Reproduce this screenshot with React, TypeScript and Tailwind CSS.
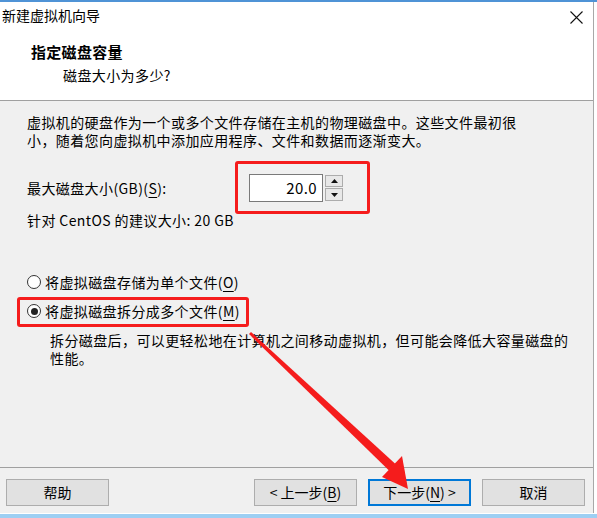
import React from "react";

const U = ({ children }: { children: React.ReactNode }) => (
  <span className="underline underline-offset-[3px] decoration-1">{children}</span>
);

const Radio = ({ checked, children }: { checked?: boolean; children: React.ReactNode }) => (
  <div className="flex h-[20px] items-center gap-[4px]">
    <span className="flex h-[14px] w-[14px] items-center justify-center rounded-full border border-[#333] bg-white">
      {checked && <span className="h-[7px] w-[7px] rounded-full bg-[#222]" />}
    </span>
    <span>{children}</span>
  </div>
);

const Button = ({ children, focused }: { children: React.ReactNode; focused?: boolean }) => (
  <button
    className={
      focused
        ? "flex h-[27px] w-[103px] items-center justify-center border-2 border-[#0078d7] bg-[#e1e1e1] text-[14px]"
        : "flex h-[27px] w-[103px] items-center justify-center border border-[#adadad] bg-[#e1e1e1] text-[14px]"
    }
  >
    {children}
  </button>
);

const SpinBox = () => (
  <div className="flex h-[28px] items-center gap-[2px]">
    <div className="flex h-[28px] w-[74px] items-center justify-end border border-[#7a7a7a] bg-white pr-[5px] text-[15px]">
      20.0
    </div>
    <div className="flex flex-col gap-[1px]">
      <div className="flex h-[12px] w-[18px] items-center justify-center border border-[#acacac] bg-[#e8e8e8]">
        <svg width="7" height="4" viewBox="0 0 7 4">
          <path d="M3.5 0 L7 4 L0 4 Z" fill="#111" />
        </svg>
      </div>
      <div className="flex h-[13px] w-[18px] items-center justify-center border border-[#acacac] bg-[#e8e8e8]">
        <svg width="7" height="4" viewBox="0 0 7 4">
          <path d="M0 0 L7 0 L3.5 4 Z" fill="#111" />
        </svg>
      </div>
    </div>
  </div>
);

export default function App() {
  return (
    <div
      className="relative h-[518px] w-[597px] overflow-hidden bg-white text-[14px] text-black"
      style={{ fontFamily: '"Noto Sans CJK SC", "Noto Sans", sans-serif' }}
    >
      <div className="h-[2px] bg-[#4f93d6]" />
      <div className="w-[594px] border-r border-[#a8a8a8]">
        {/* header */}
        <div className="h-[98px] bg-white">
          <div className="flex h-[26px] items-center justify-between pl-[2px] pr-[10px]">
            <span>新建虚拟机向导</span>
            <svg width="13" height="13" viewBox="0 0 13 13" className="mt-[4px]">
              <path d="M0.5 0.5 L12.5 12.5 M12.5 0.5 L0.5 12.5" stroke="#111" strokeWidth="1.1" />
            </svg>
          </div>
          <div className="mt-[14px] flex h-[20px] items-center pl-[31px] text-[15px] font-bold tracking-[0.3px]">
            指定磁盘容量
          </div>
          <div className="mt-[3px] flex h-[20px] items-center pl-[63px] tracking-[0.4px]">磁盘大小为多少?</div>
        </div>
        <div className="h-px bg-[#a0a0a0]" />

        {/* body */}
        <div className="h-[366px] bg-[#f0f0f0] pl-[27px] pt-[12px] tracking-[0.4px]">
          <p className="whitespace-nowrap leading-[18px]">
            虚拟机的硬盘作为一个或多个文件存储在主机的物理磁盘中。这些文件最初很
            <br />
            小，随着您向虚拟机中添加应用程序、文件和数据而逐渐变大。
          </p>
          <div className="mt-[25px] flex items-center">
            <span className="w-[222px]">
              最大磁盘大小(GB)(<U>S</U>):
            </span>
            <SpinBox />
          </div>
          <div className="mt-[9px] flex h-[18px] items-center">针对 CentOS 的建议大小: 20 GB</div>
          <div className="mt-[43px]">
            <Radio>
              将虚拟磁盘存储为单个文件(<U>O</U>)
            </Radio>
          </div>
          <div className="mt-[9px]">
            <Radio checked>
              将虚拟磁盘拆分成多个文件(<U>M</U>)
            </Radio>
          </div>
          <p className="mt-[10px] whitespace-nowrap pl-[23px] leading-[18px]">
            拆分磁盘后，可以更轻松地在计算机之间移动虚拟机，但可能会降低大容量磁盘的
            <br />
            性能。
          </p>
        </div>
        <div className="h-px bg-[#a0a0a0]" />

        {/* footer */}
        <div className="flex h-[45px] items-start bg-[#f0f0f0] pl-[6px] pr-[8px] pt-[11px]">
          <Button>帮助</Button>
          <div className="flex-1" />
          <div className="flex gap-[11px]">
            <Button>
              &lt; 上一步(<U>B</U>)
            </Button>
            <Button focused>
              下一步(<U>N</U>) &gt;
            </Button>
            <Button>取消</Button>
          </div>
        </div>
      </div>
      <div className="h-px bg-white" />
      <div className="h-[4px] bg-[#9dcff3]" />

      {/* annotations */}
      <div className="absolute left-[235px] top-[161px] h-[53px] w-[135px] rounded-[3px] border-[3px] border-[#f51c1c]" />
      <div className="absolute left-[17px] top-[297px] h-[30px] w-[232px] rounded-[3px] border-[3px] border-[#f51c1c]" />
      <svg className="pointer-events-none absolute left-0 top-0" width="597" height="518" viewBox="0 0 597 518">
        <polygon points="251,332 249,334 389,470.5 395.5,464" fill="#f51c1c" />
        <polygon points="382,477 402,456 408,489" fill="#f51c1c" />
      </svg>
    </div>
  );
}
